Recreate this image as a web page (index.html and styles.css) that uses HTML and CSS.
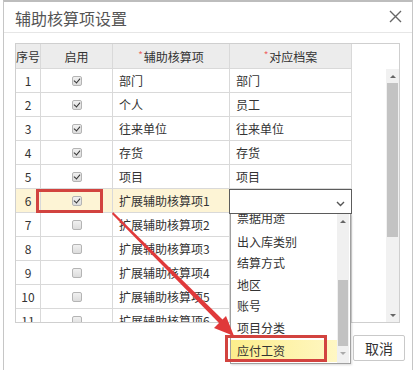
FILE: index.html
```html
<!DOCTYPE html>
<html>
<head>
<meta charset="utf-8">
<link rel="stylesheet" href="styles.css">
</head>
<body>
<div class="page">
  <div class="dialog">
    <div class="titlebar">
      <span class="title">辅助核算项设置</span>
      <svg class="close" width="13" height="13" viewBox="0 0 13 13"><path d="M1 1L12 12M12 1L1 12" stroke="#666" stroke-width="1.4" fill="none"/></svg>
    </div>
    <div class="body">
      <div class="grid">
        <div class="grid-main">
          <div class="row head">
            <div class="c c-no">序号</div>
            <div class="c c-on">启用</div>
            <div class="c c-ctr"><span class="req">*</span>辅助核算项</div>
            <div class="c c-ctr"><span class="req">*</span>对应档案</div>
          </div>
          <div class="row"><div class="c c-no">1</div><div class="c c-on"><span class="cb on"></span></div><div class="c c-txt">部门</div><div class="c c-txt">部门</div></div>
          <div class="row"><div class="c c-no">2</div><div class="c c-on"><span class="cb on"></span></div><div class="c c-txt">个人</div><div class="c c-txt">员工</div></div>
          <div class="row"><div class="c c-no">3</div><div class="c c-on"><span class="cb on"></span></div><div class="c c-txt">往来单位</div><div class="c c-txt">往来单位</div></div>
          <div class="row"><div class="c c-no">4</div><div class="c c-on"><span class="cb on"></span></div><div class="c c-txt">存货</div><div class="c c-txt">存货</div></div>
          <div class="row"><div class="c c-no">5</div><div class="c c-on"><span class="cb on"></span></div><div class="c c-txt">项目</div><div class="c c-txt">项目</div></div>
          <div class="row sel"><div class="c c-no">6</div><div class="c c-on"><span class="cb on"></span></div><div class="c c-txt">扩展辅助核算项1</div><div class="c c-txt plain"></div></div>
          <div class="row"><div class="c c-no">7</div><div class="c c-on"><span class="cb"></span></div><div class="c c-txt">扩展辅助核算项2</div><div class="c c-txt"></div></div>
          <div class="row"><div class="c c-no">8</div><div class="c c-on"><span class="cb"></span></div><div class="c c-txt">扩展辅助核算项3</div><div class="c c-txt"></div></div>
          <div class="row"><div class="c c-no">9</div><div class="c c-on"><span class="cb"></span></div><div class="c c-txt">扩展辅助核算项4</div><div class="c c-txt"></div></div>
          <div class="row"><div class="c c-no">10</div><div class="c c-on"><span class="cb"></span></div><div class="c c-txt">扩展辅助核算项5</div><div class="c c-txt"></div></div>
          <div class="row"><div class="c c-no">11</div><div class="c c-on"><span class="cb"></span></div><div class="c c-txt">扩展辅助核算项6</div><div class="c c-txt"></div></div>
        </div>
        <div class="vscroll">
          <div class="vs-head"></div>
          <div class="vs-track">
            <div class="vs-btn"><span class="tri up"></span></div>
            <div class="vs-thumb"></div>
            <div class="vs-fill"></div>
            <div class="vs-btn"><span class="tri down"></span></div>
          </div>
        </div>
      </div>
      <div class="footer">
        <button class="btn">取消</button>
      </div>
    </div>
  </div>

  <div class="select">
    <svg class="chev" width="9" height="6" viewBox="0 0 9 6"><path d="M1 1L4.5 4.5L8 1" stroke="#555" stroke-width="1.4" fill="none"/></svg>
  </div>
  <div class="list">
    <div class="list-items">
      <div class="item first"><span class="shift">票据用途</span></div>
      <div class="item">出入库类别</div>
      <div class="item">结算方式</div>
      <div class="item">地区</div>
      <div class="item">账号</div>
      <div class="item">项目分类</div>
      <div class="item hot">应付工资</div>
    </div>
    <div class="ls">
      <div class="ls-btn"><span class="tri up"></span></div>
      <div class="ls-gap"></div>
      <div class="ls-thumb"></div>
      <div class="ls-btn"><span class="tri down light"></span></div>
    </div>
  </div>

  <div class="mark mark-cb"></div>
  <div class="mark mark-item"></div>

  <svg class="arrow" width="416" height="370" viewBox="0 0 416 370">
    <polygon points="113,212 223,320 220,324 112,214" fill="#e0393a"/>
    <polygon points="234,336 214,328 226,316" fill="#e0393a"/>
  </svg>
</div>
</body>
</html>
```

FILE: styles.css
```css
* { box-sizing: border-box; }
html, body { margin: 0; padding: 0; background: #fff; }
body { font-family: "Noto Sans CJK SC", "Microsoft YaHei", sans-serif; font-size: 12px; color: #333; }

.page { position: relative; width: 416px; height: 370px; overflow: hidden; background: #fff; }

.dialog {
  margin-left: 3px;
  width: 410px;
  height: 372px;
  border-top: 2px solid #bdbdbd;
  border-left: 1px solid #c6c6c6;
  border-right: 1px solid #c6c6c6;
  background: #fff;
}

.titlebar {
  height: 31px;
  border-bottom: 1px solid #e6e6e6;
  display: flex;
  align-items: center;
  justify-content: space-between;
  padding: 0 10px 0 11px;
}
.title { font-size: 16px; color: #555; line-height: 1; padding-top: 1px; }
.close { margin-top: -2px; }

.body { padding: 10px 0 0 11px; }

.grid {
  display: flex;
  width: 385px;
  height: 280px;
  border: 1px solid #cfcfcf;
  overflow: hidden;
}
.grid-main { width: 370px; overflow: hidden; }

.row {
  display: grid;
  grid-template-columns: 25px 72px 117px 122px;
  width: 336px;
  height: 24px;
}
.row.head { height: 25px; background: #ececec; }
.c {
  border-right: 1px solid #d9d9d9;
  border-bottom: 1px solid #d9d9d9;
  display: flex;
  align-items: center;
  white-space: nowrap;
  overflow: hidden;
}
.c-no { justify-content: center; }
.c-on { justify-content: center; }
.c-ctr { justify-content: center; }
.c-txt { padding-left: 6px; }
.req { color: #e66; font-size: 10px; margin-right: 1px; position: relative; top: -2px; }
.head .c { color: #333; }

.row.sel .c-no, .row.sel .c-on, .row.sel .c-txt { background: #fdf4d5; }
.row.sel .plain { background: #fff; }

.cb {
  display: inline-block;
  width: 10px;
  height: 10px;
  border: 1px solid #b4b4b4;
  border-radius: 2px;
  background: linear-gradient(#f0f0f0, #dcdcdc);
  position: relative;
}
.cb.on::after {
  content: "";
  position: absolute;
  left: 2px;
  top: 0px;
  width: 3px;
  height: 5px;
  border-right: 1.6px solid #333;
  border-bottom: 1.6px solid #333;
  transform: rotate(40deg);
}

.vscroll { width: 13px; display: flex; flex-direction: column; }
.vs-head { height: 25px; background: #fff; }
.vs-track { flex: 1; background: #f1f1f1; display: flex; flex-direction: column; }
.vs-btn { height: 14px; display: flex; align-items: center; justify-content: center; }
.vs-thumb { height: 154px; margin: 0 1px; background: #c3c3c3; }
.vs-fill { flex: 1; }

.tri { width: 0; height: 0; border-left: 3px solid transparent; border-right: 3px solid transparent; }
.tri.up { border-bottom: 3px solid #666; }
.tri.down { border-top: 3px solid #666; }
.tri.down.light { border-top-color: #aaa; }

.footer { display: flex; justify-content: flex-end; padding: 12px 7px 0 0; }
.btn {
  width: 52px;
  height: 26px;
  border: 1px solid #c9c9c9;
  border-radius: 2px;
  background: #fff;
  font-family: "Noto Sans CJK SC", sans-serif;
  font-size: 14px;
  color: #333;
  padding: 0;
}

.select {
  position: absolute;
  left: 229px;
  top: 189px;
  width: 123px;
  height: 25px;
  border: 1px solid #5c5c5c;
  background: #fff;
  display: flex;
  align-items: center;
  justify-content: flex-end;
  padding: 4px 6px 0 0;
}

.list {
  position: absolute;
  left: 230px;
  top: 214px;
  width: 121px;
  height: 150px;
  border: 1px solid #a0a0a0;
  border-top: none;
  background: #fff;
  display: flex;
  overflow: hidden;
  box-shadow: 1px 1px 2px rgba(0,0,0,0.15);
}
.list-items { width: 106px; }
.item { height: 21.5px; line-height: 21.5px; padding-left: 6px; color: #333; white-space: nowrap; }
.item.first { margin-top: -5px; }
.shift { position: relative; top: -2px; }
.item.hot { background: linear-gradient(to right, #fcee8c, #fff7c4); margin-top: 2px; }
.ls { width: 12px; background: #f0f0f0; display: flex; flex-direction: column; }
.ls-btn { height: 14px; display: flex; align-items: center; justify-content: center; }
.ls-gap { height: 52px; }
.ls-thumb { height: 66px; margin: 0 1px; background: #c2c2c2; }

.mark { position: absolute; border: 3px solid #d2433f; }
.mark-cb { left: 36px; top: 189px; width: 67px; height: 24px; }
.mark-item { left: 225px; top: 335px; width: 102px; height: 27px; }

.arrow { position: absolute; left: 0; top: 0; pointer-events: none; }
```
